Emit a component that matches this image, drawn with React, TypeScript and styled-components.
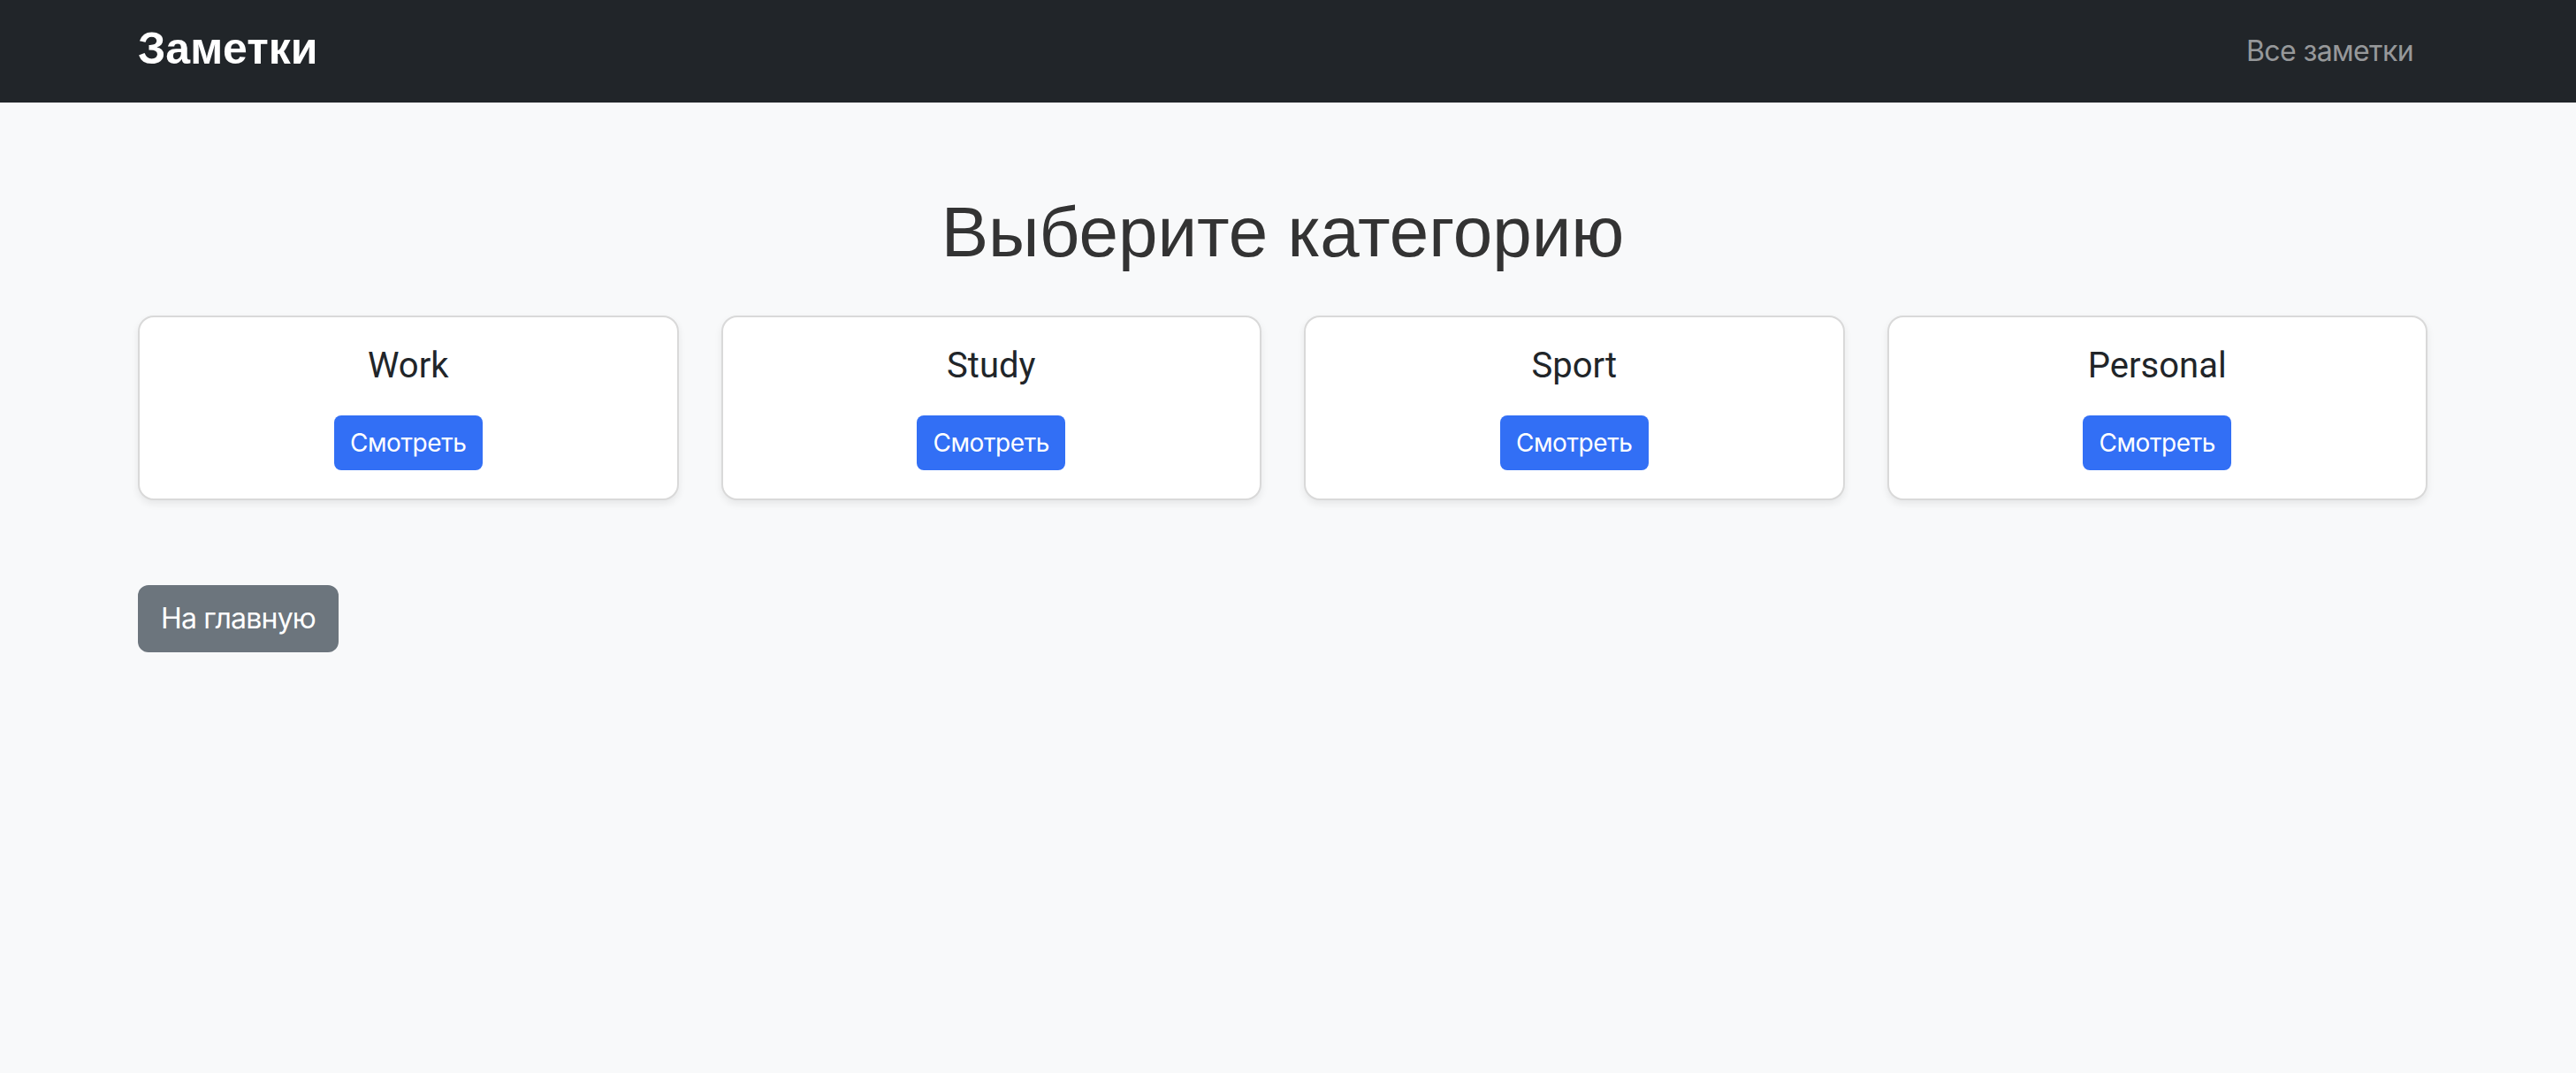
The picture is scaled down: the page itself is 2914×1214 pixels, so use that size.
import styled, { createGlobalStyle } from "styled-components";

const GlobalStyle = createGlobalStyle`
  html, body {
    margin: 0;
    padding: 0;
    background: #f8f9fa;
  }
  body {
    font-family: Inter, "Liberation Sans", Arial, sans-serif;
    color: #212529;
  }
  * {
    box-sizing: border-box;
  }
`;

const categories = ["Work", "Study", "Sport", "Personal"];

export default function App() {
  return (
    <Page>
      <GlobalStyle />
      <Navbar>
        <Container>
          <NavInner>
            <Brand href="#">Заметки</Brand>
            <NavLink href="#">Все заметки</NavLink>
          </NavInner>
        </Container>
      </Navbar>

      <Main>
        <Container>
          <Title>Выберите категорию</Title>
          <CardRow>
            {categories.map((category) => (
              <Card key={category}>
                <CardTitle>{category}</CardTitle>
                <Button $variant="primary" $size="sm">
                  Смотреть
                </Button>
              </Card>
            ))}
          </CardRow>
          <Footer>
            <Button $variant="secondary">На главную</Button>
          </Footer>
        </Container>
      </Main>
    </Page>
  );
}

const Page = styled.div`
  min-height: 1214px;
  background: #f8f9fa;
`;

const Container = styled.div`
  width: 2638px;
  padding: 0 24px;
  margin: 0 auto;
  position: relative;
  left: -6px;
`;

const Navbar = styled.nav`
  height: 116px;
  background: #212529;
  display: flex;
  align-items: center;
`;

const NavInner = styled.div`
  display: flex;
  align-items: center;
  justify-content: space-between;
`;

const Brand = styled.a`
  font-family: "Liberation Sans", Arial, sans-serif;
  font-weight: 700;
  font-size: 50px;
  line-height: 1;
  color: #fff;
  text-decoration: none;
  margin-top: -6px;
`;

const NavLink = styled.a`
  font-size: 32px;
  line-height: 48px;
  padding: 0 16px;
  color: rgba(255, 255, 255, 0.55);
  text-decoration: none;
  letter-spacing: -0.6px;
`;

const Main = styled.main`
  padding-top: 99px;
`;

const Title = styled.h1`
  margin: 0 0 46px;
  text-align: center;
  font-family: "Liberation Sans", Arial, sans-serif;
  font-weight: 400;
  font-size: 80px;
  line-height: 96px;
  color: #333;
`;

const CardRow = styled.div`
  display: grid;
  grid-template-columns: repeat(4, 1fr);
  column-gap: 48px;
`;

const Card = styled.div`
  display: flex;
  flex-direction: column;
  align-items: center;
  padding: 32px;
  background: #fff;
  border: 2px solid rgba(0, 0, 0, 0.15);
  border-radius: 18px;
  box-shadow: 0 4px 8px rgba(0, 0, 0, 0.075);
`;

const CardTitle = styled.h5`
  margin: -1px 0 32px;
  font-family: Roboto, "Liberation Sans", Arial, sans-serif;
  font-weight: 400;
  font-size: 40px;
  line-height: 48px;
  color: #212529;
`;

const Button = styled.button<{ $variant: "primary" | "secondary"; $size?: "sm" }>`
  font-family: Inter, "Liberation Sans", Arial, sans-serif;
  cursor: pointer;
  border: 2px solid transparent;
  color: #fff;
  background: ${(p) => (p.$variant === "primary" ? "#326ff5" : "#6c757d")};
  font-size: ${(p) => (p.$size === "sm" ? "28px" : "32px")};
  line-height: ${(p) => (p.$size === "sm" ? "42px" : "48px")};
  padding: ${(p) => (p.$size === "sm" ? "8px 16px" : "12px 24px")};
  border-radius: ${(p) => (p.$size === "sm" ? "8px" : "12px")};
  letter-spacing: ${(p) => (p.$size === "sm" ? "-0.4px" : "-0.8px")};
`;

const Footer = styled.div`
  margin-top: 96px;
`;
